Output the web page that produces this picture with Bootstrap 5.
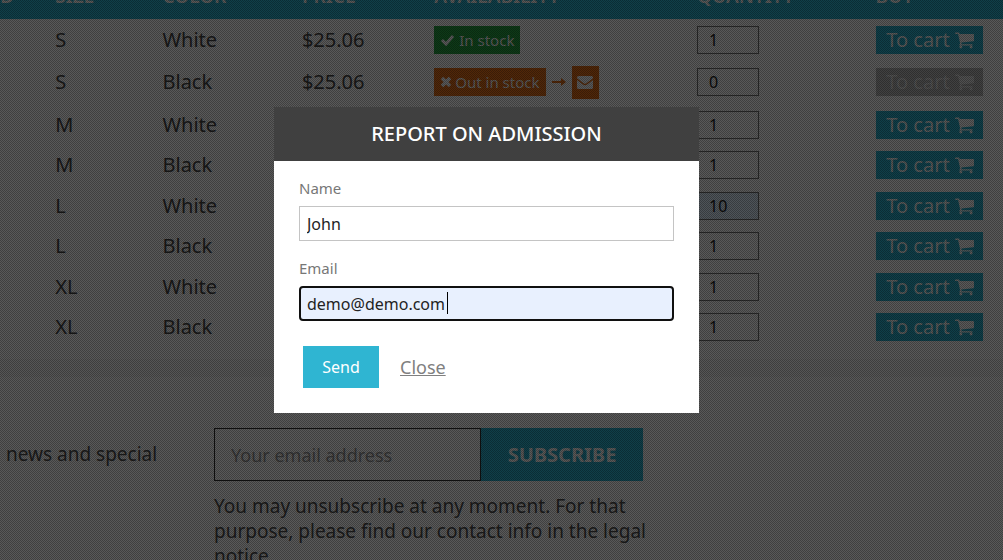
<!DOCTYPE html>
<html lang="en">
<head>
<meta charset="utf-8">
<meta name="viewport" content="width=device-width, initial-scale=1">
<title>Report on admission</title>
<link rel="stylesheet" href="https://cdn.jsdelivr.net/npm/bootstrap@5.3.0/dist/css/bootstrap.min.css">
<style>
  body { font-family: "Noto Sans", sans-serif; background: #f6f6f6; color: #484848; height: 100vh; overflow: hidden; }
  .brand-bg { background: #2fb5d2; color: #fff; }

  /* combinations table, scrolled so only the end of its head shows */
  .combos { margin-top: -37px; background: #fff; padding-bottom: 12px; }
  .combos table { table-layout: fixed; width: 100%; font-size: 20px; line-height: 24px; }
  .combos th { height: 56px; font-weight: 600; font-size: 19px; padding: 9px 0 0; vertical-align: middle; }
  .combos td { height: 41px; padding: 0; vertical-align: middle; }
  .combos tbody tr:nth-child(even) td { height: 40px; }
  .combos tbody tr:nth-child(2) td { height: 44px; }
  .c-id { width: 5.5%; } .c-size { width: 10.7%; } .c-color { width: 13.9%; }
  .c-price { width: 13.2%; } .c-avail { width: 26.2%; } .c-qty { width: 17.8%; }
  .stock { height: 28px; padding: 0 6px; font-size: 15px; color: #fff; }
  .stock-in { background: #28a745; }
  .stock-out, .notify { background: #e8721c; }
  .stock-out { gap: 3px; }
  .arrow { margin: 0 6px; }
  .notify { width: 27px; height: 33px; border: 0; padding: 0; }
  .qty { width: 62px; height: 28px; border: 1px solid #777; border-radius: 0; padding: 0 11px; font-size: 16px; color: #222; background: #fff; display: block; }
  .qty.filled { background: #e0f0ff; }
  .cart { width: 107px; height: 28px; border: 0; border-radius: 0; padding: 0 0 0 2px; font-size: 20px; line-height: 28px; }
  .cart svg { vertical-align: -2px; }
  .cart:disabled { background: #bababa; color: #e4e4e4; opacity: 1; }

  .newsletter { margin-top: 18px; background: #fff; padding: 51px 0 0 6px; font-size: 19px; line-height: 25px; color: #505050; min-height: 300px; }
  .pitch { flex: 0 0 208px; padding-top: 14px; }
  .signup { flex: 0 1 440px; }
  .signup-row { max-width: 429px; }
  .signup input { height: 53px; border: 1px solid #333; border-radius: 0; padding: 0 16px; font-size: 18px; background: #fff; }
  .signup input::placeholder { color: #999; }
  .signup .btn { width: 162px; border: 0; border-radius: 0; font-size: 20px; font-weight: 700; }
  .signup p { margin: 13px 0 0; }

  .modal-backdrop.mesh { opacity: 1; background: repeating-conic-gradient(rgba(0,0,0,.65) 0 25%, rgba(0,0,0,.75) 0 50%) 0 0 / 2px 2px; }
  .modal { padding-right: 30px; }
  .modal-dialog { max-width: 425px; margin: 107px auto 0; }
  .modal-content { border: 0; border-radius: 0; }
  .modal-header { background: #404040; color: #fff; border: 0; border-radius: 0; height: 54px; padding: 0; }
  .modal-title { font-size: 20px; font-weight: 500; }
  .modal-body { padding: 17px 25px 25px; color: #777; }
  .modal-body label { display: block; font-size: 15px; line-height: 20px; margin-bottom: 8px; }
  .modal-body .field-gap { margin-top: 17px; }
  .field { height: 35px; border: 1px solid #c4c4c4; border-radius: 0; padding: 0 7px; font-size: 16px; color: #232323; background: #fff; }
  .field.active, .field.active:focus { border: 2px solid #101010; border-radius: 4px; padding: 0 6px; background: #e8f0fe; box-shadow: none; }
  .caret { position: absolute; left: 148px; top: 6px; width: 1px; height: 22px; background: #000; }
  .actions { margin: 25px 0 0 4px; gap: 21px; }
  .send { width: 76px; height: 42px; border: 0; border-radius: 0; font-size: 16px; padding: 0; }
  .close-link { font-size: 18px; color: #808080; }
</style>
<script src="https://cdn.jsdelivr.net/npm/bootstrap@5.3.0/dist/js/bootstrap.bundle.min.js"></script>
</head>
<body class="modal-open">
<svg class="d-none" xmlns="http://www.w3.org/2000/svg">
  <symbol id="i-cart" viewBox="0 128 1664 1408"><path fill="currentColor" d="M640 1408q0 52-38 90t-90 38-90-38-38-90 38-90 90-38 90 38 38 90zm896 0q0 52-38 90t-90 38-90-38-38-90 38-90 90-38 90 38 38 90zm128-1088v512q0 24-16.500 42.500t-40.500 21.500l-1044 122q13 60 13 70 0 16-24 64h920q26 0 45 19t19 45-19 45-45 19h-1024q-26 0-45-19t-19-45q0-11 8-31.500t16-36 21.500-40 15.500-29.500l-177-823h-204q-26 0-45-19t-19-45 19-45 45-19h256q16 0 28.500 6.500t19.500 15.500 13 24.500 8 26 5.500 29.500 4.500 26h1201q26 0 45 19t19 45z"/></symbol>
  <symbol id="i-check" viewBox="0 0 14 12"><path d="M1.500 6l4 4 7-8" fill="none" stroke="currentColor" stroke-width="3"/></symbol>
  <symbol id="i-times" viewBox="0 0 12 12"><path d="M2 2l8 8M10 2l-8 8" fill="none" stroke="currentColor" stroke-width="3.500"/></symbol>
  <symbol id="i-arrow" viewBox="0 0 14 8"><path d="M0 3h9V0l5 4-5 4V5H0z" fill="#e8721c"/></symbol>
  <symbol id="i-mail" viewBox="0 0 16 13"><path d="M0 2.200V1.500Q0 0 1.500 0h13Q16 0 16 1.500v.7L9.500 7.200Q8 8.200 6.500 7.200zM0 4l6 4.600q2 1.300 4 0L16 4v7.500q0 1.500-1.500 1.500h-13Q0 13 0 11.500z" fill="#fff"/></symbol>
</svg>

<section class="combos">
  <table>
    <colgroup><col class="c-id"><col class="c-size"><col class="c-color"><col class="c-price"><col class="c-avail"><col class="c-qty"><col></colgroup>
    <thead class="brand-bg"><tr><th>D</th><th>SIZE</th><th>COLOR</th><th>PRICE</th><th>AVAILABILITY</th><th>QUANTITY</th><th>BUY</th></tr></thead>
    <tbody>
      <tr><td></td><td>S</td><td>White</td><td>$25.06</td>
        <td><span class="stock stock-in d-inline-flex align-items-center gap-1 align-middle"><svg width="15" height="12"><use href="#i-check"/></svg>In stock</span></td>
        <td><input class="qty" aria-label="Quantity" value="1"></td>
        <td><button class="btn cart brand-bg">To cart <svg width="19" height="17"><use href="#i-cart"/></svg></button></td></tr>
      <tr><td></td><td>S</td><td>Black</td><td>$25.06</td>
        <td><div class="d-flex align-items-center"><span class="stock stock-out d-inline-flex align-items-center"><svg width="12" height="12"><use href="#i-times"/></svg>Out in stock</span><svg class="arrow flex-shrink-0" width="14" height="8"><use href="#i-arrow"/></svg><button class="notify d-flex align-items-center justify-content-center" aria-label="Report on admission"><svg width="16" height="13"><use href="#i-mail"/></svg></button></div></td>
        <td><input class="qty" aria-label="Quantity" value="0"></td>
        <td><button class="btn cart" disabled>To cart <svg width="19" height="17"><use href="#i-cart"/></svg></button></td></tr>
      <tr><td></td><td>M</td><td>White</td><td></td><td></td>
        <td><input class="qty" aria-label="Quantity" value="1"></td>
        <td><button class="btn cart brand-bg">To cart <svg width="19" height="17"><use href="#i-cart"/></svg></button></td></tr>
      <tr><td></td><td>M</td><td>Black</td><td></td><td></td>
        <td><input class="qty" aria-label="Quantity" value="1"></td>
        <td><button class="btn cart brand-bg">To cart <svg width="19" height="17"><use href="#i-cart"/></svg></button></td></tr>
      <tr><td></td><td>L</td><td>White</td><td></td><td></td>
        <td><input class="qty filled" aria-label="Quantity" value="10"></td>
        <td><button class="btn cart brand-bg">To cart <svg width="19" height="17"><use href="#i-cart"/></svg></button></td></tr>
      <tr><td></td><td>L</td><td>Black</td><td></td><td></td>
        <td><input class="qty" aria-label="Quantity" value="1"></td>
        <td><button class="btn cart brand-bg">To cart <svg width="19" height="17"><use href="#i-cart"/></svg></button></td></tr>
      <tr><td></td><td>XL</td><td>White</td><td></td><td></td>
        <td><input class="qty" aria-label="Quantity" value="1"></td>
        <td><button class="btn cart brand-bg">To cart <svg width="19" height="17"><use href="#i-cart"/></svg></button></td></tr>
      <tr><td></td><td>XL</td><td>Black</td><td></td><td></td>
        <td><input class="qty" aria-label="Quantity" value="1"></td>
        <td><button class="btn cart brand-bg">To cart <svg width="19" height="17"><use href="#i-cart"/></svg></button></td></tr>
    </tbody>
  </table>
</section>

<footer class="newsletter d-flex align-items-start">
  <div class="pitch">news and special</div>
  <form class="signup">
    <div class="signup-row d-flex">
      <input type="email" class="form-control" placeholder="Your email address" aria-label="Your email address">
      <button type="button" class="btn brand-bg flex-shrink-0">SUBSCRIBE</button>
    </div>
    <p>You may unsubscribe at any moment. For that purpose, please find our contact info in the legal notice.</p>
  </form>
</footer>

<div class="modal-backdrop mesh"></div>
<div class="modal d-block" tabindex="-1" role="dialog" aria-labelledby="dlg-title">
  <div class="modal-dialog">
    <div class="modal-content">
      <div class="modal-header justify-content-center"><h1 class="modal-title" id="dlg-title">REPORT ON ADMISSION</h1></div>
      <form class="modal-body">
        <label for="f-name">Name</label>
        <input id="f-name" class="form-control field" value="John">
        <label for="f-email" class="field-gap">Email</label>
        <div class="position-relative"><input id="f-email" class="form-control field active" value="demo@demo.com"><span class="caret"></span></div>
        <div class="actions d-flex align-items-center">
          <button type="button" class="btn send brand-bg">Send</button>
          <a href="#" class="close-link">Close</a>
        </div>
      </form>
    </div>
  </div>
</div>
</body>
</html>
